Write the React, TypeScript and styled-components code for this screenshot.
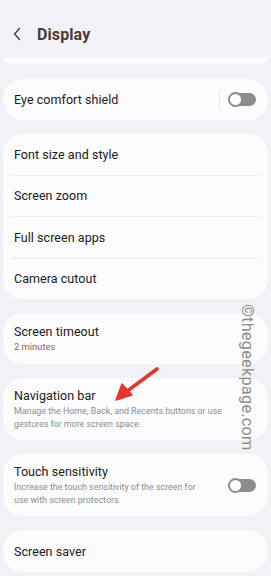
import styled, { createGlobalStyle } from 'styled-components'

const Global = createGlobalStyle`
  html, body {
    margin: 0;
    padding: 0;
    background: #f1f1f6;
  }
  body {
    font-family: Roboto, "Noto Sans", sans-serif;
    -webkit-font-smoothing: antialiased;
  }
`

const Screen = styled.div`
  position: relative;
  width: 271px;
  height: 576px;
  overflow: hidden;
  background: #f1f1f6;
  display: flex;
  flex-direction: column;
`

const Header = styled.header`
  height: 57px;
  display: flex;
  align-items: center;
  padding: 11px 0 0 12px;
  gap: 15px;
  box-sizing: border-box;
`

const Title = styled.h1`
  margin: 0;
  font-size: 16px;
  font-weight: 700;
  color: #4b3d36;
  letter-spacing: 0.1px;
`

const Sliver = styled.div`
  height: 7px;
  margin: 0 3px;
  background: #fcfcfd;
  border-radius: 0 0 10px 10px;
`

const List = styled.div`
  display: flex;
  flex-direction: column;
  gap: 14px;
  padding: 15px 3px 0;
`

const Card = styled.section`
  background: #fcfcfd;
  border-radius: 20px;
  display: flex;
  flex-direction: column;
  padding: 0 8px;
`

const Row = styled.div<{ $h: number; $divider?: boolean }>`
  min-height: ${p => p.$h}px;
  display: flex;
  align-items: center;
  gap: 9px;
  padding: 0 4px 0 3px;
  border-top: ${p => (p.$divider ? '1px solid #ececf0' : 'none')};
`

const Texts = styled.div`
  flex: 1;
  display: flex;
  flex-direction: column;
  gap: 2px;
`

const ItemTitle = styled.div`
  font-size: 12.5px;
  color: #202020;
  letter-spacing: 0.05px;
`

const Sub = styled.div<{ $accent?: boolean }>`
  font-size: ${p => (p.$accent ? 9.4 : 8.9)}px;
  line-height: 12.5px;
  color: ${p => (p.$accent ? '#8a6a3a' : '#8d8d92')};
  white-space: nowrap;
`

const VLine = styled.div`
  width: 1px;
  height: 20px;
  background: #e3e3e8;
`

const Track = styled.div`
  position: relative;
  width: 27px;
  height: 13px;
  border-radius: 7px;
  background: #8c8c90;
  flex-shrink: 0;
`

const Knob = styled.div`
  position: absolute;
  left: -1px;
  top: -1px;
  width: 11px;
  height: 11px;
  border-radius: 50%;
  background: #fff;
  border: 2px solid #8c8c90;
`

const Arrow = styled.svg`
  position: absolute;
  left: 110px;
  top: 362px;
`

const Watermark = styled.div`
  position: absolute;
  left: 240px;
  top: 304px;
  transform-origin: 0 0;
  transform: translateX(17px) rotate(90deg);
  font-size: 16.4px;
  color: #8c8c8c;
  letter-spacing: 0.2px;
  white-space: nowrap;
  text-shadow: 0 0 1px #fff, 0 0 1px #fff;
`

function Toggle() {
  return (
    <Track>
      <Knob />
    </Track>
  )
}

function App() {
  return (
    <Screen>
      <Global />
      <Header>
        <svg width="10" height="14" viewBox="0 0 10 14">
          <path d="M7.5 1.5 L2.5 7 L7.5 12.5" fill="none" stroke="#4b3d36" strokeWidth="1.4" strokeLinecap="round" strokeLinejoin="round" />
        </svg>
        <Title>Display</Title>
      </Header>
      <Sliver />
      <List>
        <Card>
          <Row $h={41}>
            <Texts>
              <ItemTitle>Eye comfort shield</ItemTitle>
            </Texts>
            <VLine />
            <Toggle />
          </Row>
        </Card>
        <Card>
          <Row $h={40.5}>
            <ItemTitle>Font size and style</ItemTitle>
          </Row>
          <Row $h={40.5} $divider>
            <ItemTitle>Screen zoom</ItemTitle>
          </Row>
          <Row $h={40.5} $divider>
            <ItemTitle>Full screen apps</ItemTitle>
          </Row>
          <Row $h={40.5} $divider>
            <ItemTitle>Camera cutout</ItemTitle>
          </Row>
        </Card>
        <Card>
          <Row $h={51}>
            <Texts>
              <ItemTitle>Screen timeout</ItemTitle>
              <Sub $accent>2 minutes</Sub>
            </Texts>
          </Row>
        </Card>
        <Card>
          <Row $h={62}>
            <Texts>
              <ItemTitle>Navigation bar</ItemTitle>
              <Sub>
                Manage the Home, Back, and Recents buttons or use
                <br />
                gestures for more screen space.
              </Sub>
            </Texts>
          </Row>
        </Card>
        <Card>
          <Row $h={62}>
            <Texts>
              <ItemTitle>Touch sensitivity</ItemTitle>
              <Sub>
                Increase the touch sensitivity of the screen for
                <br />
                use with screen protectors.
              </Sub>
            </Texts>
            <Toggle />
          </Row>
        </Card>
        <Card>
          <Row $h={42}>
            <ItemTitle>Screen saver</ItemTitle>
          </Row>
        </Card>
      </List>
      <Arrow width="52" height="42" viewBox="0 0 52 42">
        <path d="M47 7 L16 30" stroke="#e2372e" strokeWidth="3.6" strokeLinecap="round" />
        <path d="M6 38 L12 22 L22 33 Z" fill="#e2372e" stroke="#e2372e" strokeWidth="1.5" strokeLinejoin="round" />
      </Arrow>
      <Watermark>©thegeekpage.com</Watermark>
    </Screen>
  )
}

export default App
